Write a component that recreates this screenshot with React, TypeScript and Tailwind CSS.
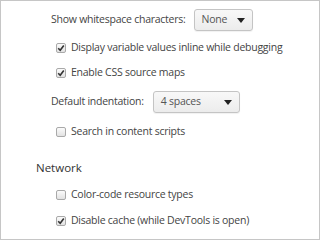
import React from "react";

function Check({ checked }: { checked: boolean }) {
  return (
    <span className="w-[10px] h-[10px] rounded-[2px] border border-[#a9a9a9] bg-gradient-to-b from-[#fbfbfb] to-[#e2e2e2] flex items-center justify-center shrink-0">
      {checked && (
        <svg width="8" height="8" viewBox="0 0 8 8">
          <path d="M1.2 4.2 L3.2 6.2 L6.8 1.4" fill="none" stroke="#333" strokeWidth="1.6" />
        </svg>
      )}
    </span>
  );
}

function CheckRow({ checked, label, cls }: { checked: boolean; label: string; cls: string }) {
  return (
    <div className={`flex items-center h-[20px] gap-[5px] pl-[55px] ${cls}`}>
      <Check checked={checked} />
      <span>{label}</span>
    </div>
  );
}

function Select({ value, w }: { value: string; w: string }) {
  return (
    <div className={`${w} h-[22px] rounded-[3px] border border-[#c4c4c4] bg-gradient-to-b from-[#f8f8f8] to-[#ececec] flex items-center justify-between pl-[7px] pr-[7px] shadow-[0_1px_1px_rgba(0,0,0,0.06)]`}>
      <span className="text-[#555]">{value}</span>
      <svg width="8" height="5" viewBox="0 0 8 5">
        <path d="M0 0 L8 0 L4 5 Z" fill="#222" />
      </svg>
    </div>
  );
}

export default function App() {
  return (
    <div
      className="w-[320px] h-[240px] border border-[#c6c6c6] bg-white text-[#444] text-[10.5px] tracking-[-0.25px] overflow-hidden pt-[8px]"
      style={{ fontFamily: '"Open Sans", "Noto Sans", sans-serif' }}
    >
      <div className="flex items-center h-[22px] pl-[50px]">
        <span>Show whitespace characters:</span>
        <div className="ml-[8px]">
          <Select value="None" w="w-[59px]" />
        </div>
      </div>
      <CheckRow checked label="Display variable values inline while debugging" cls="mt-[7px]" />
      <CheckRow checked label="Enable CSS source maps" cls="mt-[5px]" />
      <div className="flex items-center h-[22px] pl-[50px] mt-[8px]">
        <span>Default indentation:</span>
        <div className="ml-[9px]">
          <Select value="4 spaces" w="w-[87px]" />
        </div>
      </div>
      <CheckRow checked={false} label="Search in content scripts" cls="mt-[9px]" />
      <div className="flex items-center h-[20px] pl-[35px] mt-[16px] text-[11.5px] tracking-normal text-[#333]">Network</div>
      <CheckRow checked={false} label="Color-code resource types" cls="mt-[7px]" />
      <CheckRow checked label="Disable cache (while DevTools is open)" cls="mt-[6px]" />
    </div>
  );
}
